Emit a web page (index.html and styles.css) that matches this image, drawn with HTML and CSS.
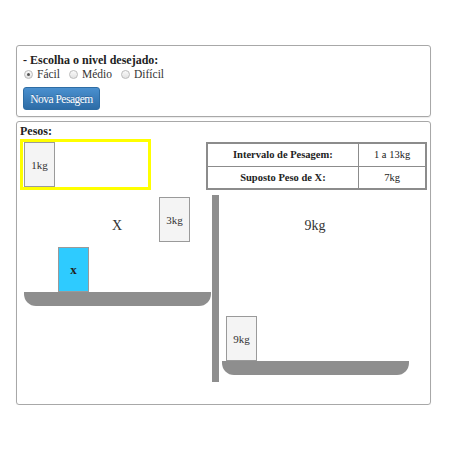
FILE: index.html
```html
<!DOCTYPE html>
<html>
<head>
<meta charset="utf-8">
<link rel="stylesheet" href="styles.css">
</head>
<body>
<div class="page">
  <div class="panel level-panel">
    <div class="title">- Escolha o nivel desejado:</div>
    <div class="radios">
      <label class="opt"><span class="radio checked"></span>Fácil</label>
      <label class="opt"><span class="radio"></span>Médio</label>
      <label class="opt"><span class="radio"></span>Difícil</label>
    </div>
    <button class="btn">Nova Pesagem</button>
  </div>
  <div class="panel weights-panel">
    <div class="title">Pesos:</div>
    <div class="top-row">
      <div class="tray">
        <div class="block">1kg</div>
      </div>
      <table class="info">
        <tr><th>Intervalo de Pesagem:</th><td>1 a 13kg</td></tr>
        <tr><th>Suposto Peso de X:</th><td>7kg</td></tr>
      </table>
    </div>
    <div class="canvas">
      <div class="label label-left">X</div>
      <div class="label label-right">9kg</div>
      <div class="block free b3">3kg</div>
      <div class="block free bx">x</div>
      <div class="pan pan-left"></div>
      <div class="pole"></div>
      <div class="block free b9">9kg</div>
      <div class="pan pan-right"></div>
    </div>
  </div>
</div>
</body>
</html>
```

FILE: styles.css
```css
* { box-sizing: border-box; }
body {
  margin: 0;
  font-family: "Liberation Serif", "Times New Roman", serif;
  color: #222;
  background: #fff;
}
.page {
  padding: 45px 19px 0 16px;
  width: 450px;
}
.panel {
  border: 1px solid #a8a8a8;
  border-radius: 3px;
  box-shadow: 0 1px 1px rgba(0,0,0,0.08);
}
.level-panel {
  height: 72px;
  padding: 7px 6px 0 6px;
}
.title {
  font-weight: bold;
  font-size: 12px;
  line-height: 14px;
}
.radios {
  display: flex;
  gap: 8px;
  font-size: 11.5px;
  line-height: 15px;
  margin-top: 0;
  color: #333;
}
.opt {
  display: flex;
  align-items: center;
  gap: 4px;
}
.radio {
  width: 9px;
  height: 9px;
  border-radius: 50%;
  border: 1px solid #bbb;
  background: linear-gradient(#fafafa, #e2e2e2);
  display: inline-block;
  position: relative;
  margin-left: 1px;
}
.radio.checked::after {
  content: "";
  position: absolute;
  left: 2px;
  top: 2px;
  width: 3px;
  height: 3px;
  border-radius: 50%;
  background: #555;
}
.btn {
  margin-top: 5px;
  width: 77px;
  height: 23px;
  border: 1px solid #2e6da4;
  border-radius: 3px;
  background: linear-gradient(#4a90cf, #2d6ca6);
  color: #fff;
  font-family: "Liberation Serif", "Times New Roman", serif;
  font-size: 11.5px;
  letter-spacing: -0.5px;
  padding: 0;
  display: block;
  text-shadow: 0 -1px 0 rgba(0,0,0,0.2);
}
.weights-panel {
  margin-top: 4px;
  height: 284px;
  padding: 2px 3px 0 3px;
}
.top-row {
  display: flex;
  align-items: flex-start;
  margin-top: 1px;
}
.tray {
  width: 131px;
  height: 51px;
  border: 3px solid #ffff00;
  padding: 0 0 0 1px;
}
.block {
  width: 31px;
  height: 45px;
  background: #f4f4f4;
  border: 1px solid #9a9a9a;
  display: flex;
  align-items: center;
  justify-content: center;
  font-size: 11px;
  color: #333;
}
.info {
  margin-left: 55px;
  margin-top: 3px;
  border-collapse: collapse;
  border: 2px solid #8c8c8c;
  font-size: 10.5px;
  width: 222px;
}
.info th, .info td {
  border: 1px solid #8c8c8c;
  height: 23px;
  padding: 0;
  text-align: center;
}
.info th {
  width: 152px;
  font-weight: bold;
}
.info td {
  font-weight: normal;
}
.canvas {
  position: relative;
  height: 213px;
  margin-left: -3px;
}
.free { position: absolute; }
.b3 { left: 142px; top: 7px; }
.bx { left: 41px; top: 57px; background: #2ecbff; font-weight: bold; font-size: 13px; color: #222; }
.b9 { left: 209px; top: 126px; }
.pan {
  position: absolute;
  background: #8e8e8e;
  border-radius: 0 0 12px 12px;
}
.pan-left { left: 7px; top: 102px; width: 187px; height: 14px; }
.pan-right { left: 205px; top: 171px; width: 187px; height: 14px; }
.pole {
  position: absolute;
  left: 195px;
  top: 5px;
  width: 7px;
  height: 187px;
  background: #8e8e8e;
}
.label {
  position: absolute;
  font-size: 14px;
  top: 28px;
  width: 60px;
  text-align: center;
  color: #333;
}
.label-left { left: 70px; }
.label-right { left: 268px; }
```
